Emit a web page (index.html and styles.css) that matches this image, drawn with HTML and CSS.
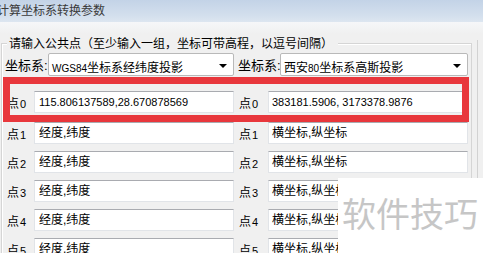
FILE: index.html
```html
<!DOCTYPE html>
<html lang="zh-CN">
<head>
    <meta charset="UTF-8">
    <meta name="viewport" content="width=device-width, initial-scale=1.0">
    <title>计算坐标系转换参数</title>
    <link rel="stylesheet" href="styles.css">
</head>
<body>
    <div class="window">
        <div class="titlebar">计算坐标系转换参数</div>
        <div class="body">
            <div class="group">
                <div class="legend">请输入公共点（至少输入一组，坐标可带高程，以逗号间隔）</div>
                <div class="combo-row">
                    <span class="combo-label">坐标系:</span>
                    <div class="combo combo-left"><span><span class="latin">WGS84</span>坐标系经纬度投影</span><i class="arrow"></i></div>
                    <span class="combo-label combo-label-right">坐标系:</span>
                    <div class="combo combo-right"><span>西安<span class="latin">80</span>坐标系高斯投影</span><i class="arrow"></i></div>
                </div>
                <div class="row row-first">
                    <span class="pt">点<span class="num">0</span></span>
                    <div class="field field-left numbers">115.806137589,28.670878569</div>
                    <span class="pt pt-right">点<span class="num">0</span></span>
                    <div class="field field-right numbers">383181.5906, 3173378.9876</div>
                </div>
                <div class="row row-second">
                    <span class="pt">点<span class="num">1</span></span>
                    <div class="field field-left">经度,纬度</div>
                    <span class="pt pt-right">点<span class="num">1</span></span>
                    <div class="field field-right">横坐标,纵坐标</div>
                </div>
                <div class="row">
                    <span class="pt">点<span class="num">2</span></span>
                    <div class="field field-left">经度,纬度</div>
                    <span class="pt pt-right">点<span class="num">2</span></span>
                    <div class="field field-right">横坐标,纵坐标</div>
                </div>
                <div class="row">
                    <span class="pt">点<span class="num">3</span></span>
                    <div class="field field-left">经度,纬度</div>
                    <span class="pt pt-right">点<span class="num">3</span></span>
                    <div class="field field-right">横坐标,纵坐标</div>
                </div>
                <div class="row">
                    <span class="pt">点<span class="num">4</span></span>
                    <div class="field field-left">经度,纬度</div>
                    <span class="pt pt-right">点<span class="num">4</span></span>
                    <div class="field field-right">横坐标,纵坐标</div>
                </div>
                <div class="row">
                    <span class="pt">点<span class="num">5</span></span>
                    <div class="field field-left">经度,纬度</div>
                    <span class="pt pt-right">点<span class="num">5</span></span>
                    <div class="field field-right">横坐标,纵坐标</div>
                </div>
            </div>
            <div class="side"></div>
        </div>
        <!-- annotation drawn over the first row -->
        <div class="highlight"></div>
        <div class="watermark">软件技巧</div>
    </div>
</body>
</html>
```

FILE: styles.css
```css
html, body {
    margin: 0;
    padding: 0;
}
body {
    font-family: "Liberation Sans", "Noto Sans CJK SC", sans-serif;
    background: #f0f0f0;
    color: #000;
    overflow: hidden;
}
.window {
    position: relative;
    width: 483px;
    height: 253px;
    overflow: hidden;
    background: #f0f0f0;
}
.titlebar {
    height: 22px;
    line-height: 22px;
    font-size: 12px;
    color: #3a3a3a;
    text-indent: -3px;
    white-space: nowrap;
    background: linear-gradient(to bottom, #c3d3e7, #d3dfed 70%, #dde6f0);
}
.body {
    display: flex;
    height: 231px;
    background: linear-gradient(to bottom, #f6f7f9, #f0f0f0 12px);
}
.group {
    margin: 21px 0 0 1px;
    width: 469px;
    border: 1px solid #d5d5d5;
    border-bottom: none;
    box-shadow: inset 1px 1px 0 #fff;
}
.side {
    flex: 1;
    margin: 18px 0 0 5px;
    border-left: 1px solid #d2d2d2;
}
.legend {
    width: max-content;
    height: 16px;
    line-height: 16px;
    margin: -8px 0 -8px 5px;
    padding: 0 5px 0 2px;
    font-size: 12px;
    background: #f0f0f0;
}
.combo-row {
    display: flex;
    align-items: center;
    height: 23px;
    margin: 9px 0 0 3px;
}
.combo-label {
    flex-shrink: 0;
    width: 43px;
    font-size: 13px;
    white-space: nowrap;
}
.combo-label-right {
    width: 42px;
    margin-left: 4px;
}
.combo {
    flex-shrink: 0;
    display: flex;
    align-items: center;
    box-sizing: border-box;
    height: 23px;
    padding: 3px 6px 0 3px;
    font-size: 12px;
    white-space: nowrap;
    background: #fff;
    border: 1px solid #b9b9b9;
    border-radius: 2px;
}
.combo-left {
    width: 186px;
}
.combo-right {
    width: 188px;
}
.latin {
    font-size: 10px;
}
.arrow {
    margin-left: auto;
    width: 0;
    height: 0;
    border-left: 4px solid transparent;
    border-right: 4px solid transparent;
    border-top: 4px solid #000;
}
.row {
    display: flex;
    align-items: center;
    height: 22px;
    margin: 7px 0 0 5px;
}
.row-first {
    margin-top: 15px;
}
.row-second {
    margin-top: 9px;
}
.pt {
    flex-shrink: 0;
    width: 27px;
    font-size: 12px;
    white-space: nowrap;
}
.pt-right {
    width: 29px;
    margin-left: 5px;
}
.num {
    font-size: 11px;
    margin-left: 1px;
}
.field {
    flex-shrink: 0;
    box-sizing: border-box;
    height: 22px;
    line-height: 20px;
    padding-left: 4px;
    font-size: 12px;
    white-space: nowrap;
    overflow: hidden;
    background: #fff;
    border: 1px solid #e1e4e8;
    border-top-color: #a9abb0;
}
.field-left {
    width: 200px;
}
.field-right {
    width: 200px;
    padding-left: 3px;
}
.numbers {
    font-size: 11px;
}
.highlight {
    position: absolute;
    left: 3px;
    top: 77px;
    width: 466px;
    height: 45px;
    box-sizing: border-box;
    border: 7px solid #e8373c;
}
.watermark {
    position: absolute;
    left: 338px;
    top: 178px;
    right: 0;
    bottom: 0;
    padding: 20px 0 0 4px;
    font-size: 34px;
    line-height: 34px;
    color: #c6c6c6;
    background: #fff;
    white-space: nowrap;
}
```
